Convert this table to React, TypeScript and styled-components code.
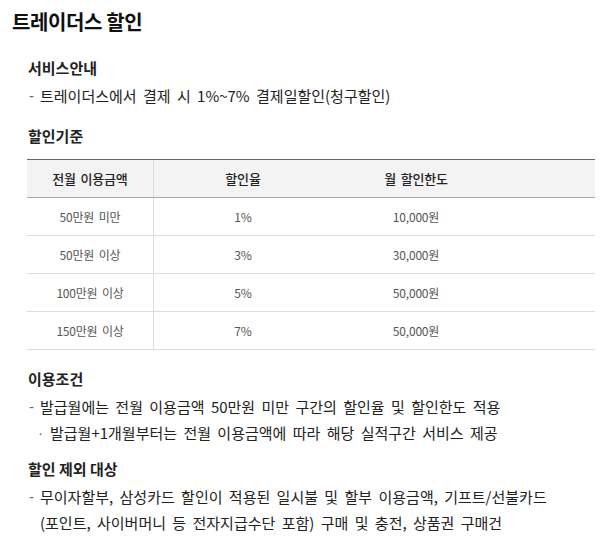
import React from 'react';
import styled, { createGlobalStyle } from 'styled-components';

const GlobalStyle = createGlobalStyle`
  body {
    margin: 0;
    background: #fff;
    font-family: "Noto Sans CJK KR", "Noto Sans", sans-serif;
    color: #333;
  }
`;

const Page = styled.div`
  width: 616px;
  padding: 8px 21px 0 12px;
  box-sizing: border-box;
`;

const Title = styled.h1`
  margin: 0;
  font-size: 20px;
  font-weight: 700;
  color: #111;
  line-height: 28px;
  letter-spacing: -0.4px;
`;

const Section = styled.section<{ $top: number }>`
  margin-top: ${(p) => p.$top}px;
  padding-left: 16px;
`;

const Heading = styled.h2`
  margin: 0 0 4px;
  font-size: 15px;
  font-weight: 700;
  color: #222;
  line-height: 22px;
`;

const List = styled.ul`
  margin: 0;
  padding: 0;
  list-style: none;
`;

const Item = styled.li<{ $sub?: boolean }>`
  position: relative;
  padding-left: ${(p) => (p.$sub ? 22 : 12)}px;
  font-size: 15px;
  line-height: 26px;
  color: #222;
  word-spacing: 3px;

  &::before {
    content: '${(p) => (p.$sub ? '·' : '-')}';
    position: absolute;
    left: ${(p) => (p.$sub ? 10 : 1)}px;
    top: 0;
    color: #666;
    font-family: "Liberation Sans", sans-serif;
  }
`;

const Table = styled.div`
  margin-top: 12px;
  width: 568px;
  margin-left: -1px;
  border-top: 1px solid #666;
`;

const Row = styled.div<{ $head?: boolean }>`
  display: grid;
  grid-template-columns: 127px 178px 1fr;
  height: 38px;
  background: ${(p) => (p.$head ? '#f3f3f3' : '#fff')};
  border-bottom: 1px solid ${(p) => (p.$head ? '#aaa' : '#ddd')};
  box-sizing: border-box;
`;

const Cell = styled.div<{ $head?: boolean; $last?: boolean; $first?: boolean }>`
  display: flex;
  align-items: center;
  justify-content: center;
  font-size: ${(p) => (p.$head ? 13 : 12)}px;
  font-weight: ${(p) => (p.$head ? 500 : 400)};
  color: ${(p) => (p.$head ? '#222' : '#555')};
  border-right: ${(p) => (p.$first ? '1px solid #ddd' : 'none')};
  padding-right: ${(p) => (p.$last ? 95 : 0)}px;
  letter-spacing: -0.2px;
  word-spacing: 2px;
`;

const rows = [
  ['50만원 미만', '1%', '10,000원'],
  ['50만원 이상', '3%', '30,000원'],
  ['100만원 이상', '5%', '50,000원'],
  ['150만원 이상', '7%', '50,000원'],
];

export default function App() {
  return (
    <Page>
      <GlobalStyle />
      <Title>트레이더스 할인</Title>

      <Section $top={21}>
        <Heading>서비스안내</Heading>
        <List>
          <Item>트레이더스에서 결제 시 1%~7% 결제일할인(청구할인)</Item>
        </List>
      </Section>

      <Section $top={16}>
        <Heading>할인기준</Heading>
        <Table>
          <Row $head>
            <Cell $head $first>전월 이용금액</Cell>
            <Cell $head>할인율</Cell>
            <Cell $head $last>월 할인한도</Cell>
          </Row>
          {rows.map((r) => (
            <Row key={r[0]}>
              <Cell $first>{r[0]}</Cell>
              <Cell>{r[1]}</Cell>
              <Cell $last>{r[2]}</Cell>
            </Row>
          ))}
        </Table>
      </Section>

      <Section $top={18}>
        <Heading>이용조건</Heading>
        <List>
          <Item>발급월에는 전월 이용금액 50만원 미만 구간의 할인율 및 할인한도 적용</Item>
          <Item $sub>발급월+1개월부터는 전월 이용금액에 따라 해당 실적구간 서비스 제공</Item>
        </List>
      </Section>

      <Section $top={12}>
        <Heading>할인 제외 대상</Heading>
        <List>
          <Item>
            무이자할부, 삼성카드 할인이 적용된 일시불 및 할부 이용금액, 기프트/선불카드
            <br />
            (포인트, 사이버머니 등 전자지급수단 포함) 구매 및 충전, 상품권 구매건
          </Item>
        </List>
      </Section>
    </Page>
  );
}
